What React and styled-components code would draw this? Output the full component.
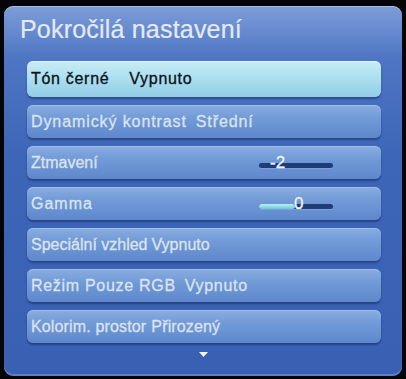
import React from "react";
import styled, { createGlobalStyle } from "styled-components";

const Global = createGlobalStyle`
  html, body { margin: 0; padding: 0; background: #000; }
  body { width: 406px; height: 379px; overflow: hidden; font-family: "Liberation Sans", Arial, sans-serif; }
`;

const Screen = styled.div`
  width: 406px;
  height: 379px;
  padding: 6px 4px 3px 4px;
  box-sizing: border-box;
  background: #050508;
`;

const Panel = styled.div`
  height: 100%;
  box-sizing: border-box;
  border-radius: 9px;
  background: linear-gradient(180deg, #7c9dd8 0%, #4f76c4 14%, #3e66b8 40%, #3960b3 100%);
  box-shadow: inset 0 1px 0 rgba(255,255,255,0.35), inset 0 -2px 0 rgba(160,190,235,0.35);
  padding: 0 21px 0 23px;
  display: flex;
  flex-direction: column;
`;

const Title = styled.div`
  font-size: 25px;
  line-height: 28px;
  color: #e4eaf3;
  margin: 9px 0 0 -7px;
  height: 46px;
  letter-spacing: 0.2px;
  -webkit-text-stroke: 0.2px #e4eaf3;
`;

const List = styled.div`
  display: flex;
  flex-direction: column;
  gap: 8px;
`;

const Row = styled.div`
  height: ${p => (p.$selected ? 36 : 33)}px;
  border-radius: 6px;
  box-sizing: border-box;
  padding: 0 0 0 4px;
  display: flex;
  align-items: center;
  font-size: 16px;
  color: ${p => (p.$selected ? "#0c1018" : "#dce3ee")};
  -webkit-text-stroke: 0.3px ${p => (p.$selected ? "#0c1018" : "#dce3ee")};
  background: ${p =>
    p.$selected
      ? "linear-gradient(180deg, #c8ecf6 0%, #ade0ef 45%, #92cce6 100%)"
      : "linear-gradient(180deg, #89addf 0%, #719ad7 40%, #5e88cc 100%)"};
  box-shadow: ${p =>
    p.$selected
      ? "0 2px 2px rgba(20,40,90,0.5), inset 0 1px 0 rgba(255,255,255,0.5)"
      : "0 2px 2px rgba(20,40,90,0.55), inset 0 1px 0 rgba(180,205,240,0.55)"};
  position: relative;
  white-space: pre;
`;

const Label = styled.span`
  letter-spacing: ${p => p.$ls}px;
`;

const Setting = styled.span`
  margin-left: ${p => p.$gap}px;
  letter-spacing: ${p => p.$ls}px;
`;

const Slider = styled.div`
  position: absolute;
  left: 232px;
  top: 50%;
  width: 74px;
  height: 5px;
  border-radius: 3px;
  background: #1e3d78;
  box-shadow: 0 1px 0 rgba(150,180,230,0.4);
`;

const Fill = styled.div`
  position: absolute;
  left: 0;
  top: 0;
  bottom: 0;
  border-radius: 3px;
  background: linear-gradient(180deg, #b6eef3, #6fc8d8);
`;

const Value = styled.span`
  position: absolute;
  top: -10px;
  font-size: 17px;
  line-height: 20px;
  color: #f2f6fb;
  -webkit-text-stroke: 0.4px #f2f6fb;
  text-shadow: 0 0 1px rgba(10,30,70,0.6);
`;

const ArrowWrap = styled.div`
  display: flex;
  justify-content: center;
  margin-top: 9px;
  padding-right: 2px;
`;

const rows = [
  { label: "Tón černé", value: "Vypnuto", gap: 20, ls: 0.7, selected: true },
  { label: "Dynamický kontrast", value: "Střední", gap: 9, ls: 0.9 },
  { label: "Ztmavení", ls: 0, slider: { fill: 0, value: "-2", valueLeft: 11 } },
  { label: "Gamma", ls: 1, slider: { fill: 36, value: "0", valueLeft: 35 } },
  { label: "Speciální vzhled", value: "Vypnuto", gap: 4, ls: 0 },
  { label: "Režim Pouze RGB", value: "Vypnuto", gap: 9, ls: 0.7 },
  { label: "Kolorim. prostor", value: "Přirozený", gap: 5, ls: 0.15 },
];

export default function App() {
  return (
    <>
      <Global />
      <Screen>
        <Panel>
          <Title>Pokročilá nastavení</Title>
          <List>
            {rows.map((r, i) => (
              <Row key={i} $selected={r.selected}>
                <Label $ls={r.ls}>{r.label}</Label>
                {r.value && (
                  <Setting $gap={r.gap} $ls={r.ls}>
                    {r.value}
                  </Setting>
                )}
                {r.slider && (
                  <Slider>
                    {r.slider.fill > 0 && <Fill style={{ width: r.slider.fill }} />}
                    <Value style={{ left: r.slider.valueLeft }}>{r.slider.value}</Value>
                  </Slider>
                )}
              </Row>
            ))}
          </List>
          <ArrowWrap>
            <svg width="9" height="5" viewBox="0 0 9 5">
              <path d="M0 0 H9 L4.5 5 Z" fill="#f4f7fb" />
            </svg>
          </ArrowWrap>
        </Panel>
      </Screen>
    </>
  );
}
